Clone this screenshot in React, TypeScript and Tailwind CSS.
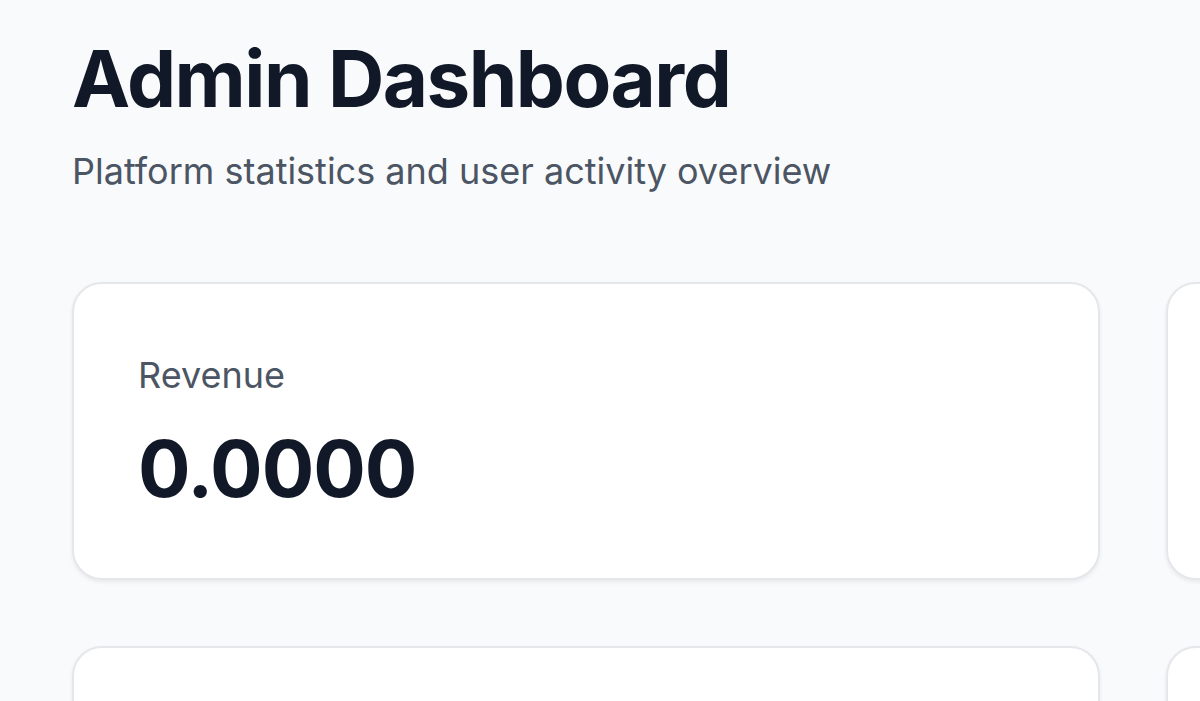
import React from "react";

function StatCard({ label, value }: { label?: string; value?: string }) {
  return (
    <div className="h-[298px] rounded-[30px] border-2 border-[#e5e7eb] bg-white px-[64px] pt-[64px] shadow-[0_2px_4px_rgba(0,0,0,0.07)]">
      {label ? (
        <>
          <div className="text-[36px] leading-[54px] text-[#4b5563]">{label}</div>
          <div className="mt-[25px] text-[78px] leading-[84px] font-bold tracking-[-1px] text-[#111827]">{value}</div>
        </>
      ) : null}
    </div>
  );
}

export default function App() {
  return (
    <div
      className="h-[701px] w-[1200px] overflow-hidden bg-[#f9fafb]"
      style={{ fontFamily: "Inter, 'Noto Sans', sans-serif" }}
    >
      <div className="px-[72px] pt-[31px]">
        <h1 className="text-[78px] leading-[96px] font-bold tracking-[-1.5px] text-[#111827]">Admin Dashboard</h1>
        <p className="mt-[16px] text-[36px] leading-[56px] text-[#4b5563]">
          Platform statistics and user activity overview
        </p>
        <div className="mt-[83px] grid w-[2122px] grid-cols-[1028px_1028px] gap-[66px]">
          <StatCard label="Revenue" value="0.0000" />
          <StatCard />
          <StatCard />
          <StatCard />
        </div>
      </div>
    </div>
  );
}
